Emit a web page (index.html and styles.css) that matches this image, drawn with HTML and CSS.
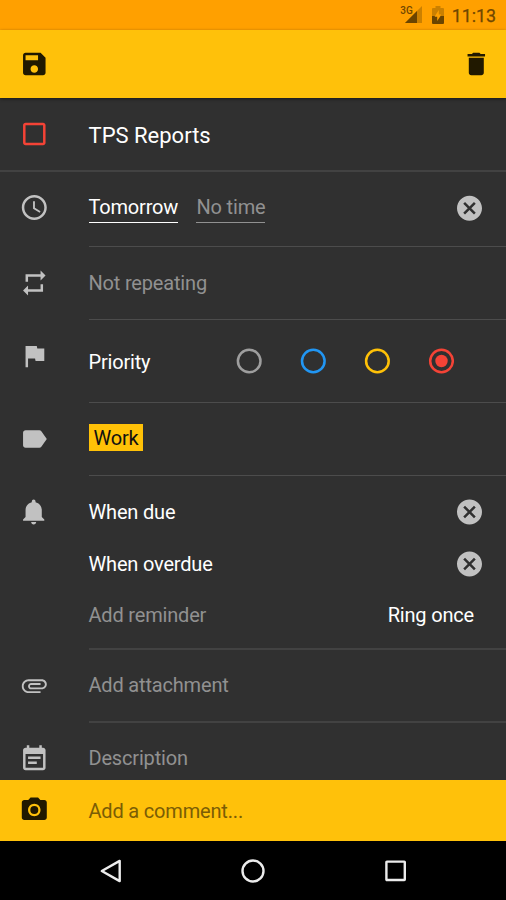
FILE: index.html
```html
<!DOCTYPE html>
<html lang="en">
<head>
<meta charset="utf-8">
<title>TPS Reports</title>
<link rel="stylesheet" href="styles.css">
</head>
<body>
<svg width="0" height="0" class="defs">
  <symbol id="cancel" viewBox="0 0 24 24"><path d="M12 2C6.470 2 2 6.470 2 12s4.470 10 10 10 10-4.470 10-10S17.530 2 12 2zm5 13.590L15.590 17 12 13.410 8.410 17 7 15.590 10.590 12 7 8.410 8.410 7 12 10.590 15.590 7 17 8.410 13.410 12 17 15.590z"/></symbol>
</svg>
<div class="screen">
  <header class="status">
    <span class="net">3G</span>
    <svg class="signal" viewBox="0 0 17 17"><path d="M17 0v17H0z" opacity=".35"/><path d="M12 5v12H0z"/></svg>
    <svg class="battery" viewBox="0 0 12 18"><path d="M1 2h2.500V0h5v2H11q1 0 1 1v7H8.200l1-1.500H6.800V4L3 10H0V3q0-1 1-1z" opacity=".35"/><path d="M0 10h2.800v.7h2.400V15l3.300-5H12v7q0 1-1 1H1q-1 0-1-1z"/></svg>
    <span class="time">11:13</span>
  </header>
  <div class="appbar">
    <svg class="icon" viewBox="0 0 24 24"><path d="M17 3H5c-1.110 0-2 .9-2 2v14c0 1.100.89 2 2 2h14c1.100 0 2-.9 2-2V7l-4-4zm-5 16c-1.660 0-3-1.340-3-3s1.340-3 3-3 3 1.340 3 3-1.340 3-3 3zm3-10H5V5h10v4z"/></svg>
    <svg class="icon" viewBox="0 0 24 24"><path d="M6 19c0 1.100.9 2 2 2h8c1.100 0 2-.9 2-2V7H6v12zM19 4h-3.500l-1-1h-5l-1 1H5v2h14V4z"/></svg>
  </div>
  <main class="list">
    <section class="row title">
      <svg class="icon red" viewBox="0 0 24 24"><path d="M19 5v14H5V5h14m0-2H5c-1.100 0-2 .9-2 2v14c0 1.100.9 2 2 2h14c1.100 0 2-.9 2-2V5c0-1.100-.9-2-2-2z"/></svg>
      <div class="body">TPS Reports</div>
    </section>
    <section class="row date">
      <svg class="icon" viewBox="0 0 24 24"><path d="M11.990 2C6.470 2 2 6.480 2 12s4.470 10 9.990 10C17.520 22 22 17.520 22 12S17.520 2 11.990 2zM12 20c-4.420 0-8-3.580-8-8s3.580-8 8-8 8 3.580 8 8-3.580 8-8 8zm.5-13H11v6l5.250 3.150.75-1.230-4.500-2.670z"/></svg>
      <div class="body"><span class="field day">Tomorrow</span><span class="field muted">No time</span><svg class="icon close"><use href="#cancel"/></svg></div>
    </section>
    <section class="row repeat">
      <svg class="icon" viewBox="0 0 24 24"><path d="M7 7h10v3l4-4-4-4v3H5v6h2V7zm10 10H7v-3l-4 4 4 4v-3h12v-6h-2v4z"/></svg>
      <div class="body muted">Not repeating</div>
    </section>
    <section class="row priority">
      <svg class="icon" viewBox="0 0 24 24"><path d="M14.400 6L14 4H5v17h2v-7h5.600l.4 2h7V6z"/></svg>
      <div class="body"><span class="name">Priority</span>
        <div class="radios">
          <svg class="radio none" viewBox="0 0 26 26"><circle cx="13.200" cy="13" r="11.300"/></svg>
          <svg class="radio low" viewBox="0 0 26 26"><circle cx="13.300" cy="13" r="11.300"/></svg>
          <svg class="radio medium" viewBox="0 0 26 26"><circle cx="13.400" cy="13" r="11.300"/></svg>
          <svg class="radio high" viewBox="0 0 26 26"><circle cx="13.500" cy="13" r="11.300"/><circle class="dot" cx="13.500" cy="13" r="6.200"/></svg>
        </div>
      </div>
    </section>
    <section class="row tags">
      <svg class="icon" viewBox="0 0 24 24"><path d="M17.630 5.840C17.270 5.330 16.670 5 16 5L5 5.010C3.900 5.010 3 5.900 3 7v10c0 1.100.9 1.990 2 1.990L16 19c.67 0 1.270-.33 1.630-.84L22 12l-4.370-6.160z"/></svg>
      <div class="body"><span class="tag">Work</span></div>
    </section>
    <section class="row reminders">
      <svg class="icon" viewBox="0 0 24 24"><path d="M11.500 22c1.100 0 2-.9 2-2h-4c0 1.100.9 2 2 2zm6.500-6v-5.500c0-3.070-2.130-5.640-5-6.320V3.500c0-.83-.67-1.500-1.500-1.500S10 2.670 10 3.500v.68c-2.870.68-5 3.250-5 6.320V16l-2 2v1h17v-1l-2-2z"/></svg>
      <div class="body">
        <div class="line"><span>When due</span><svg class="icon close"><use href="#cancel"/></svg></div>
        <div class="line"><span>When overdue</span><svg class="icon close"><use href="#cancel"/></svg></div>
        <div class="line"><span class="muted">Add reminder</span><span class="ring">Ring once</span></div>
      </div>
    </section>
    <section class="row attach">
      <svg class="icon" viewBox="0 0 24 24"><path d="M7.500 18C4.460 18 2 15.540 2 12.500S4.460 7 7.500 7H18c2.210 0 4 1.790 4 4s-1.790 4-4 4H9.500C8.120 15 7 13.880 7 12.500S8.120 10 9.500 10H17v1.500H9.500c-.55 0-1 .45-1 1s.45 1 1 1H18c1.380 0 2.500-1.120 2.500-2.500S19.380 8.500 18 8.500H7.500c-2.210 0-4 1.790-4 4s1.790 4 4 4H17V18H7.500z"/></svg>
      <div class="body muted">Add attachment</div>
    </section>
    <section class="row desc">
      <svg class="icon" viewBox="0 0 24 24"><path d="M17 10H7v2h10v-2zm2-7h-1V1h-2v2H8V1H6v2H5c-1.110 0-1.990.9-1.990 2L3 19c0 1.100.89 2 2 2h14c1.100 0 2-.9 2-2V5c0-1.100-.9-2-2-2zm0 16H5V8h14v11zm-5-5H7v2h7v-2z"/></svg>
      <div class="body muted">Description</div>
    </section>
  </main>
  <div class="comment">
    <svg class="icon" viewBox="0 0 24 24"><circle cx="12" cy="12" r="3.200"/><path d="M9 2L7.170 4H4c-1.100 0-2 .9-2 2v12c0 1.100.9 2 2 2h16c1.100 0 2-.9 2-2V6c0-1.100-.9-2-2-2h-3.170L15 2H9zm3 15c-2.760 0-5-2.240-5-5s2.240-5 5-5 5 2.240 5 5-2.240 5-5 5z"/></svg>
    <span>Add a comment...</span>
  </div>
  <nav class="nav">
    <svg viewBox="0 0 24 24"><path d="M20.700 1.900v20.200L2.800 12z"/></svg>
    <svg viewBox="0 0 24 24"><circle cx="12" cy="12" r="10.500"/></svg>
    <svg viewBox="0 0 24 24"><rect x="2.400" y="2.600" width="18.400" height="18.400" rx=".5"/></svg>
  </nav>
</div>
</body>
</html>
```
FILE: styles.css
```css
* { box-sizing: border-box; }
body { margin: 0; background: #000; font-family: Roboto, sans-serif; font-size: 20px; line-height: 24px; letter-spacing: -.18px; color: #fff; }
.defs { display: none; }
.screen { width: 506px; height: 900px; display: flex; flex-direction: column; overflow: hidden; }
.icon { width: 30px; height: 30px; flex: none; fill: #c1c1c1; transform: translateX(.3px); }
.muted { color: #919191; }

.status { height: 29.500px; flex: none; background: #ffa000; color: #704700; display: flex; align-items: flex-start; justify-content: flex-end; padding-right: 10px; }
.status svg { fill: #6b4400; }
.net { font-size: 10px; line-height: 12px; font-weight: 500; letter-spacing: 0; margin-top: 5px; margin-right: -8px; }
.signal { width: 17px; height: 17px; margin-top: 6px; }
.battery { width: 12px; height: 18px; margin: 6px 8px 0 10px; }
.time { font-size: 17.800px; line-height: 20px; letter-spacing: 0; -webkit-text-stroke: .25px currentColor; margin-top: 6px; }

.appbar { height: 68.500px; flex: none; background: #ffc10a; display: flex; justify-content: space-between; padding: 19px 15px 0 19px; position: relative; box-shadow: 0 1px 3px rgba(0, 0, 0, .5); }
.appbar .icon, .comment .icon { fill: #211900; }

.list { height: 682px; flex: none; background: #303030; }
.row { display: flex; padding-left: 19px; }
.row .body { flex: 1; margin-left: 39.500px; border-bottom: 1px solid #4c4c4c; }
.title { height: 74px; border-bottom: 2px solid #424242; font-size: 22px; letter-spacing: 0; }
.title .icon { margin-top: 21px; }
.title .red { fill: #f44336; }
.title .body { border: 0; padding-top: 26px; }
.date { height: 75px; }
.date .icon { margin-top: 20px; transform: translate(.3px, .5px); }
.date .body { display: flex; align-items: flex-start; }
.field { margin-top: 23px; height: 28px; border-bottom: 1px solid currentColor; }
.day { margin-right: 18.300px; }
.icon.close { margin-left: auto; margin-right: 22px; transform: translateX(.5px); }
.date .icon.close { margin-top: 21px; transform: translate(.5px, .3px); }
.repeat { height: 73px; }
.repeat .icon { margin-top: 21px; }
.repeat .body { padding-top: 24px; }
.priority { height: 83px; }
.priority .icon { margin-top: 21px; }
.priority .body { display: flex; padding-top: 28px; }
.name { width: 147.500px; padding-top: 2px; }
.radios { display: flex; gap: 38px; }
.radio { width: 26px; height: 26px; fill: none; stroke: currentColor; stroke-width: 2.500; }
.dot { fill: currentColor; stroke: none; }
.none { color: #9e9e9e; }
.low { color: #2196f3; }
.medium { color: #ffc107; }
.high { color: #f44336; }
.tags { height: 73px; }
.tags .icon { margin-top: 21px; }
.tags .body { padding-top: 21px; }
.tag { display: block; width: 54px; height: 27px; padding-left: 5px; line-height: 29px; background: #ffc107; color: #111; }
.reminders { height: 174px; }
.reminders > .icon { margin-top: 21px; }
.reminders .body { padding-top: 10px; border-bottom: 2px solid #424242; }
.line { height: 51.700px; display: flex; align-items: center; }
.ring { margin-left: auto; margin-right: 32px; }
.attach { height: 73px; }
.attach .icon { margin-top: 20px; transform: translate(.3px, .5px); }
.attach .body { padding-top: 23px; border-bottom: 2px solid #424242; }
.desc { height: 57px; }
.desc .icon { margin-top: 21px; }
.desc .body { padding-top: 23px; border: 0; }

.comment { height: 61px; flex: none; background: #ffc10a; color: #7b5d05; display: flex; padding-left: 19px; }
.comment .icon { margin: 15px 39.500px 0 0; }
.comment span { margin-top: 19px; }

.nav { height: 59px; flex: none; background: #000; display: flex; justify-content: center; gap: 118.500px; padding-top: 17.500px; }
.nav svg { width: 24px; height: 24px; fill: none; stroke: #ececec; stroke-width: 2.400; stroke-linejoin: round; }
```
